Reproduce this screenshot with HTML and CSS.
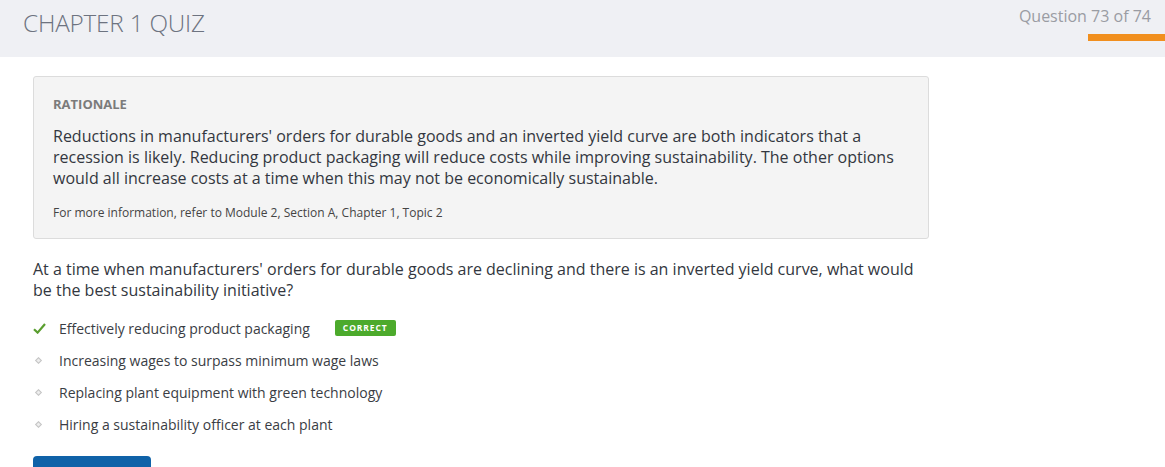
FILE: index.html
```html
<!DOCTYPE html>
<html>
<head>
<meta charset="utf-8">
<link rel="stylesheet" href="styles.css">
</head>
<body>
<header class="topbar">
  <h1 class="title">CHAPTER 1 QUIZ</h1>
  <div class="progress">
    <div class="progress-label">Question 73 of 74</div>
    <div class="progress-bar"></div>
  </div>
</header>
<main class="content">
  <section class="rationale">
    <div class="rationale-head">RATIONALE</div>
    <p class="rationale-text">Reductions in manufacturers' orders for durable goods and an inverted yield curve are both indicators that a recession is likely. Reducing product packaging will reduce costs while improving sustainability. The other options would all increase costs at a time when this may not be economically sustainable.</p>
    <p class="rationale-ref">For more information, refer to Module 2, Section A, Chapter 1, Topic 2</p>
  </section>
  <p class="question">At a time when manufacturers' orders for durable goods are declining and there is an inverted yield curve, what would be the best sustainability initiative?</p>
  <ul class="options">
    <li class="option">
      <span class="marker"><svg width="13" height="11" viewBox="0 0 13 11"><path d="M1 6.2 L4.6 9.6 L12 1" fill="none" stroke="#5a9e2f" stroke-width="2.2"/></svg></span>
      <span class="opt-text">Effectively reducing product packaging</span>
      <span class="badge">CORRECT</span>
    </li>
    <li class="option"><span class="marker"><span class="diamond"></span></span><span class="opt-text">Increasing wages to surpass minimum wage laws</span></li>
    <li class="option"><span class="marker"><span class="diamond"></span></span><span class="opt-text">Replacing plant equipment with green technology</span></li>
    <li class="option"><span class="marker"><span class="diamond"></span></span><span class="opt-text">Hiring a sustainability officer at each plant</span></li>
  </ul>
  <button class="next-btn"></button>
</main>
</body>
</html>
```
FILE: styles.css
```css
* { box-sizing: border-box; }
html, body { margin: 0; padding: 0; background: #fff; }
body {
  font-family: "Open Sans", "Liberation Sans", sans-serif;
  color: #333740;
  overflow: hidden;
  height: 467px;
}
.topbar {
  background: #eff0f4;
  height: 57px;
  display: flex;
  justify-content: space-between;
  align-items: flex-start;
}
.title {
  margin: 0;
  padding: 6px 0 0 23px;
  font-weight: 300;
  font-size: 24.3px;
  line-height: 34px;
  color: #6d7380;
  letter-spacing: -0.2px;
}
.progress {
  display: flex;
  flex-direction: column;
  align-items: flex-end;
  padding-top: 6px;
}
.progress-label {
  font-size: 16px;
  line-height: 20px;
  color: #9a9ca3;
  padding-right: 14px;
}
.progress-bar {
  margin-top: 8px;
  width: 77px;
  height: 7px;
  background: #f18f1e;
}
.content {
  padding: 19px 0 0 33px;
  width: 929px;
}
.rationale {
  background: #f4f4f4;
  border: 1px solid #dcdcdc;
  border-radius: 3px;
  padding: 19px 19px 17px 19px;
}
.rationale-head {
  font-size: 13px;
  font-weight: 700;
  color: #7b7b7b;
  line-height: 16px;
}
.rationale-text {
  margin: 14px 0 0;
  font-size: 16px;
  line-height: 21px;
  color: #333740;
}
.rationale-ref {
  margin: 16px 0 0;
  font-size: 12px;
  line-height: 16px;
  color: #444;
}
.question {
  margin: 20px 0 0;
  font-size: 16px;
  line-height: 21px;
  color: #333740;
}
.options {
  list-style: none;
  margin: 11px 0 0;
  padding: 0;
}
.option {
  display: flex;
  align-items: center;
  height: 32px;
  font-size: 14px;
  color: #3a3d44;
}
.marker {
  width: 26px;
  display: flex;
  align-items: center;
  justify-content: flex-start;
}
.diamond {
  display: inline-block;
  width: 5px;
  height: 5px;
  margin-left: 3px;
  border: 1px solid #c4c4c4;
  background: #eee;
  transform: rotate(45deg);
}
.badge {
  margin-left: 25px;
  background: #4caa2c;
  color: #fff;
  font-size: 8.5px;
  font-weight: 700;
  letter-spacing: 0.9px;
  padding: 1px 8px;
  line-height: 14px;
  border-radius: 2px;
}
.next-btn {
  display: block;
  margin-top: 16px;
  width: 118px;
  height: 36px;
  border: none;
  border-radius: 4px;
  background: #0f62a8;
}
```
